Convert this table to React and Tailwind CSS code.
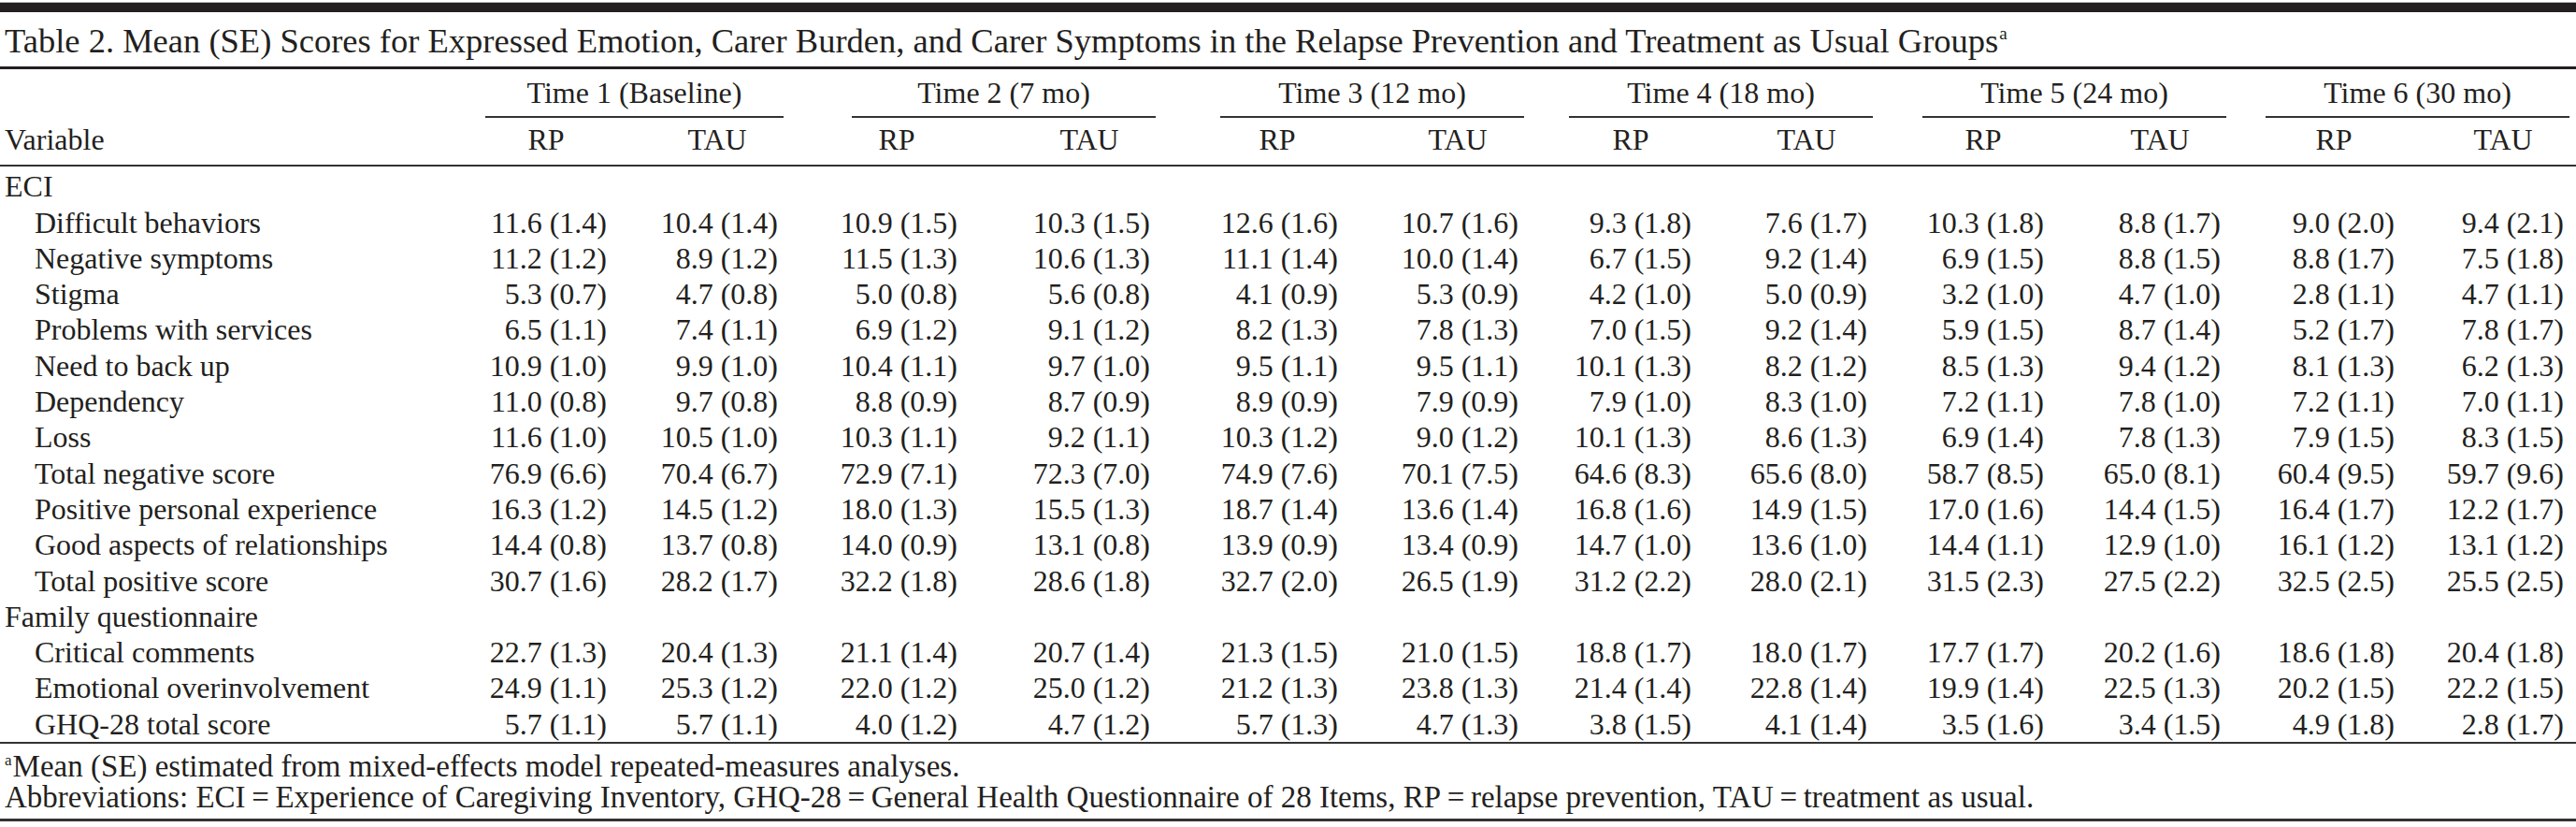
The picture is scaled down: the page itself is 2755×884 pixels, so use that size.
import React from "react";

const rows = [
  { label: "ECI", section: true },
  { label: "Difficult behaviors", v: ["11.6 (1.4)", "10.4 (1.4)", "10.9 (1.5)", "10.3 (1.5)", "12.6 (1.6)", "10.7 (1.6)", "9.3 (1.8)", "7.6 (1.7)", "10.3 (1.8)", "8.8 (1.7)", "9.0 (2.0)", "9.4 (2.1)"] },
  { label: "Negative symptoms", v: ["11.2 (1.2)", "8.9 (1.2)", "11.5 (1.3)", "10.6 (1.3)", "11.1 (1.4)", "10.0 (1.4)", "6.7 (1.5)", "9.2 (1.4)", "6.9 (1.5)", "8.8 (1.5)", "8.8 (1.7)", "7.5 (1.8)"] },
  { label: "Stigma", v: ["5.3 (0.7)", "4.7 (0.8)", "5.0 (0.8)", "5.6 (0.8)", "4.1 (0.9)", "5.3 (0.9)", "4.2 (1.0)", "5.0 (0.9)", "3.2 (1.0)", "4.7 (1.0)", "2.8 (1.1)", "4.7 (1.1)"] },
  { label: "Problems with services", v: ["6.5 (1.1)", "7.4 (1.1)", "6.9 (1.2)", "9.1 (1.2)", "8.2 (1.3)", "7.8 (1.3)", "7.0 (1.5)", "9.2 (1.4)", "5.9 (1.5)", "8.7 (1.4)", "5.2 (1.7)", "7.8 (1.7)"] },
  { label: "Need to back up", v: ["10.9 (1.0)", "9.9 (1.0)", "10.4 (1.1)", "9.7 (1.0)", "9.5 (1.1)", "9.5 (1.1)", "10.1 (1.3)", "8.2 (1.2)", "8.5 (1.3)", "9.4 (1.2)", "8.1 (1.3)", "6.2 (1.3)"] },
  { label: "Dependency", v: ["11.0 (0.8)", "9.7 (0.8)", "8.8 (0.9)", "8.7 (0.9)", "8.9 (0.9)", "7.9 (0.9)", "7.9 (1.0)", "8.3 (1.0)", "7.2 (1.1)", "7.8 (1.0)", "7.2 (1.1)", "7.0 (1.1)"] },
  { label: "Loss", v: ["11.6 (1.0)", "10.5 (1.0)", "10.3 (1.1)", "9.2 (1.1)", "10.3 (1.2)", "9.0 (1.2)", "10.1 (1.3)", "8.6 (1.3)", "6.9 (1.4)", "7.8 (1.3)", "7.9 (1.5)", "8.3 (1.5)"] },
  { label: "Total negative score", v: ["76.9 (6.6)", "70.4 (6.7)", "72.9 (7.1)", "72.3 (7.0)", "74.9 (7.6)", "70.1 (7.5)", "64.6 (8.3)", "65.6 (8.0)", "58.7 (8.5)", "65.0 (8.1)", "60.4 (9.5)", "59.7 (9.6)"] },
  { label: "Positive personal experience", v: ["16.3 (1.2)", "14.5 (1.2)", "18.0 (1.3)", "15.5 (1.3)", "18.7 (1.4)", "13.6 (1.4)", "16.8 (1.6)", "14.9 (1.5)", "17.0 (1.6)", "14.4 (1.5)", "16.4 (1.7)", "12.2 (1.7)"] },
  { label: "Good aspects of relationships", v: ["14.4 (0.8)", "13.7 (0.8)", "14.0 (0.9)", "13.1 (0.8)", "13.9 (0.9)", "13.4 (0.9)", "14.7 (1.0)", "13.6 (1.0)", "14.4 (1.1)", "12.9 (1.0)", "16.1 (1.2)", "13.1 (1.2)"] },
  { label: "Total positive score", v: ["30.7 (1.6)", "28.2 (1.7)", "32.2 (1.8)", "28.6 (1.8)", "32.7 (2.0)", "26.5 (1.9)", "31.2 (2.2)", "28.0 (2.1)", "31.5 (2.3)", "27.5 (2.2)", "32.5 (2.5)", "25.5 (2.5)"] },
  { label: "Family questionnaire", section: true },
  { label: "Critical comments", v: ["22.7 (1.3)", "20.4 (1.3)", "21.1 (1.4)", "20.7 (1.4)", "21.3 (1.5)", "21.0 (1.5)", "18.8 (1.7)", "18.0 (1.7)", "17.7 (1.7)", "20.2 (1.6)", "18.6 (1.8)", "20.4 (1.8)"] },
  { label: "Emotional overinvolvement", v: ["24.9 (1.1)", "25.3 (1.2)", "22.0 (1.2)", "25.0 (1.2)", "21.2 (1.3)", "23.8 (1.3)", "21.4 (1.4)", "22.8 (1.4)", "19.9 (1.4)", "22.5 (1.3)", "20.2 (1.5)", "22.2 (1.5)"] },
  { label: "GHQ-28 total score", v: ["5.7 (1.1)", "5.7 (1.1)", "4.0 (1.2)", "4.7 (1.2)", "5.7 (1.3)", "4.7 (1.3)", "3.8 (1.5)", "4.1 (1.4)", "3.5 (1.6)", "3.4 (1.5)", "4.9 (1.8)", "2.8 (1.7)"] },
];

const times = ["Time 1 (Baseline)", "Time 2 (7 mo)", "Time 3 (12 mo)", "Time 4 (18 mo)", "Time 5 (24 mo)", "Time 6 (30 mo)"];

// 13 tracks: label column, then RP / TAU for each time point (numbers right-aligned)
const grid = "grid grid-cols-[519px_130px_183px_192px_206px_201px_193px_185px_188px_189px_189px_186px_181px]";

function App() {
  return (
    <div className="w-[2755px] h-[884px] bg-white text-[#231f20] font-['Liberation_Serif','Times_New_Roman',serif] overflow-hidden">
      {/* barra superiore */}
      <div className="pt-[2px]">
        <div className="h-[1px] bg-[#b8b8b8]" />
        <div className="h-[10px] bg-[#231f20]" />
      </div>

      {/* titolo */}
      <div className="mt-[6px] h-[52px] pl-[5px] text-[36.5px] leading-[50px] whitespace-nowrap">
        Table 2. Mean (SE) Scores for Expressed Emotion, Carer Burden, and Carer Symptoms in the Relapse Prevention and Treatment as Usual Groups
        <sup className="text-[19px] relative top-[-14px] ml-[1px]">a</sup>
      </div>
      <div className="h-[3px] bg-[#231f20]" />

      {/* intestazione tempi */}
      <div className={`${grid} mt-[6px] text-[32px] leading-[38.3px]`}>
        <div />
        {times.map((t) => (
          <div key={t} className="col-span-2 flex justify-end">
            <div className="w-[325px] mr-[-6px] text-center pb-[6px] border-b-2 border-[#333]">{t}</div>
          </div>
        ))}
      </div>

      {/* intestazione variabili */}
      <div className={`${grid} h-[50px] items-end pb-[8px] text-[32px] leading-[38.3px]`}>
        <div className="pl-[5px]">Variable</div>
        {times.map((t) => (
          <React.Fragment key={t}>
            <div className="flex justify-end"><div className="w-[130px] text-center">RP</div></div>
            <div className="flex justify-end"><div className="w-[130px] text-center">TAU</div></div>
          </React.Fragment>
        ))}
      </div>
      <div className="h-[2px] bg-[#333]" />

      {/* righe dati */}
      <div className="mt-[2px] text-[32px] leading-[38.3px]">
        {rows.map((r) => (
          <div key={r.label} className={`${grid} h-[38.3px] whitespace-nowrap`}>
            <div className={r.section ? "pl-[5px]" : "pl-[37px]"}>{r.label}</div>
            {r.v && r.v.map((val, i) => (
              <div key={i} className="text-right">{val}</div>
            ))}
          </div>
        ))}
      </div>
      <div className="h-[2px] bg-[#333]" />

      {/* note */}
      <div className="pt-[8px] pl-[5px] text-[33px] leading-[33px] whitespace-nowrap">
        <div>
          <sup className="text-[17px] relative top-[-12px] mr-[1px]">a</sup>Mean (SE) estimated from mixed-effects model repeated-measures analyses.
        </div>
        <div>
          Abbreviations: ECI{"\u2009"}={"\u2009"}Experience of Caregiving Inventory, GHQ-28{"\u2009"}={"\u2009"}General Health Questionnaire of 28 Items, RP{"\u2009"}={"\u2009"}relapse prevention, TAU{"\u2009"}={"\u2009"}treatment as usual.
        </div>
      </div>
      <div className="mt-[6px] h-[3px] bg-[#333]" />
    </div>
  );
}

export default App;
